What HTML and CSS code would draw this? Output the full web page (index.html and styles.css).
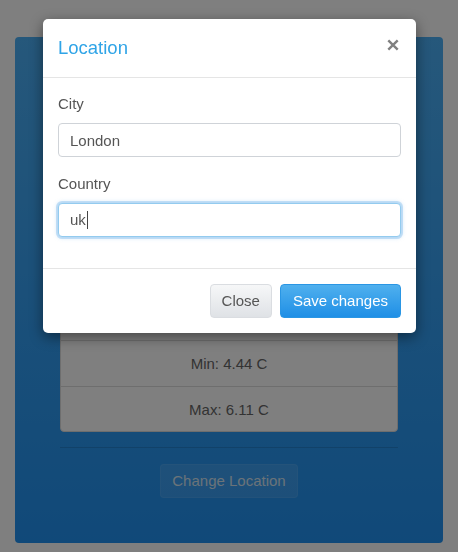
FILE: index.html
```html
<!DOCTYPE html>
<html lang="en">
<head>
<meta charset="utf-8">
<title>Weather</title>
<link rel="stylesheet" href="styles.css">
</head>
<body>
<main class="panel">
  <h1 class="panel-title">London, UK</h1>
  <p class="panel-sub">Clouds</p>
  <ul class="list">
    <li class="item">Overcast clouds</li>
    <li class="item">Temperature: 5.28 C</li>
    <li class="item">Humidity: 87%</li>
    <li class="item">Wind: 4.1 m/s</li>
    <li class="item">Min: 4.44 C</li>
    <li class="item">Max: 6.11 C</li>
  </ul>
  <hr class="rule">
  <div class="actions">
    <button class="btn-ghost" type="button">Change Location</button>
  </div>
</main>

<div class="backdrop"></div>

<section class="modal" role="dialog" aria-labelledby="modal-title">
  <header class="modal-header">
    <h4 class="modal-title" id="modal-title">Location</h4>
    <button class="close" type="button" aria-label="Close">
      <svg width="12" height="12" viewBox="0 0 12 12" aria-hidden="true">
        <path d="M1.3 1.3 L10.7 10.7 M10.7 1.3 L1.3 10.7" stroke="#808080" stroke-width="2.4" stroke-linecap="butt" fill="none"/>
      </svg>
    </button>
  </header>
  <div class="modal-body">
    <div class="form-group">
      <label class="label" for="city">City</label>
      <input class="form-control" id="city" type="text" value="London">
    </div>
    <div class="form-group">
      <label class="label" for="country">Country</label>
      <div class="form-control focused" id="country">uk<span class="caret"></span></div>
    </div>
  </div>
  <footer class="modal-footer">
    <button class="btn btn-default" type="button">Close</button>
    <button class="btn btn-primary" type="button">Save changes</button>
  </footer>
</section>
</body>
</html>
```

FILE: styles.css
```css
* { box-sizing: border-box; }

html, body {
  margin: 0;
  padding: 0;
  background: #ffffff;
  font-family: "Liberation Sans", Arial, Helvetica, sans-serif;
  font-size: 15px;
  color: #555555;
  overflow: hidden;
}

body {
  height: 552px;
  padding: 37px 15px 9px;
}

.panel {
  height: 506px;
  border-radius: 4px;
  background: linear-gradient(#4cb0f6, #2192f2);
  padding: 20px 45px 45px;
}

.panel-title {
  margin: 0 0 20px;
  font-size: 34px;
  line-height: 40px;
  font-weight: normal;
  color: #ffffff;
  text-align: center;
}

.panel-sub {
  margin: 0 0 18px;
  line-height: 21px;
  color: #ffffff;
  text-align: center;
}

.list {
  list-style: none;
  margin: 0;
  padding: 0;
  background: #ffffff;
  border: 1px solid #dddddd;
  border-radius: 4px;
}

.item {
  padding: 12px 15px;
  line-height: 21px;
  text-align: center;
  color: #666666;
  border-top: 1px solid #dddddd;
}

.item:first-child { border-top: 0; }
.item:last-child { padding-bottom: 11px; }

.rule {
  margin: 15px 0 16px;
  border: 0;
  border-top: 1px solid rgba(0, 0, 0, 0.13);
  height: 0;
}

.actions {
  display: flex;
  justify-content: center;
}

.btn-ghost {
  font: inherit;
  font-size: 15px;
  line-height: 20px;
  height: 34px;
  padding: 6px 11px;
  border-radius: 4px;
  border: 1px solid rgba(255, 255, 255, 0.06);
  background: rgba(255, 255, 255, 0.1);
  color: #d6e6f2;
}

.backdrop {
  position: fixed;
  inset: 0;
  background: rgba(0, 0, 0, 0.5);
}

.modal {
  position: absolute;
  left: 43px;
  top: 19px;
  width: 373px;
  background: #ffffff;
  border-radius: 5px;
  box-shadow: 0 4px 14px rgba(0, 0, 0, 0.45);
}

.modal-header {
  display: flex;
  align-items: flex-start;
  padding: 15px;
  border-bottom: 1px solid #e5e5e5;
}

.modal-title {
  margin: 0;
  font-size: 18.5px;
  line-height: 28px;
  font-weight: normal;
  color: #2fa4e7;
}

.close {
  margin: 5px 2px 0 auto;
  padding: 0;
  border: 0;
  background: none;
  width: 12px;
  height: 12px;
  display: flex;
}

.modal-body {
  padding: 15px;
}

.form-group {
  margin-bottom: 16px;
}

.label {
  display: block;
  line-height: 22px;
  margin-bottom: 8px;
  color: #555555;
}

.form-control {
  display: block;
  width: 100%;
  height: 34px;
  padding: 6px 11px;
  font: inherit;
  font-size: 15px;
  line-height: 20px;
  color: #555555;
  background: #ffffff;
  border: 1px solid #cfd3d8;
  border-radius: 4px;
  outline: none;
}

.focused {
  border-color: #93cbef;
  box-shadow: 0 0 0 2px rgba(102, 175, 233, 0.32), 0 0 4px 1px rgba(102, 175, 233, 0.35);
}

.caret {
  display: inline-block;
  width: 1px;
  height: 18px;
  margin-left: 1px;
  vertical-align: -4px;
  background: #444444;
}

.modal-footer {
  display: flex;
  justify-content: flex-end;
  gap: 8px;
  padding: 15px;
  border-top: 1px solid #e5e5e5;
}

.btn {
  font: inherit;
  font-size: 15px;
  line-height: 20px;
  height: 34px;
  padding: 6px 12px;
  border-radius: 4px;
  cursor: pointer;
}

.btn-default {
  padding: 6px 11px;
  color: #555555;
  background: linear-gradient(#f6f7f8, #dfe2e6);
  border: 1px solid #dadde1;
}

.btn-primary {
  color: #ffffff;
  background: linear-gradient(#4fb0ee, #1f8fe6);
  border: 1px solid #2a96e4;
}
```
